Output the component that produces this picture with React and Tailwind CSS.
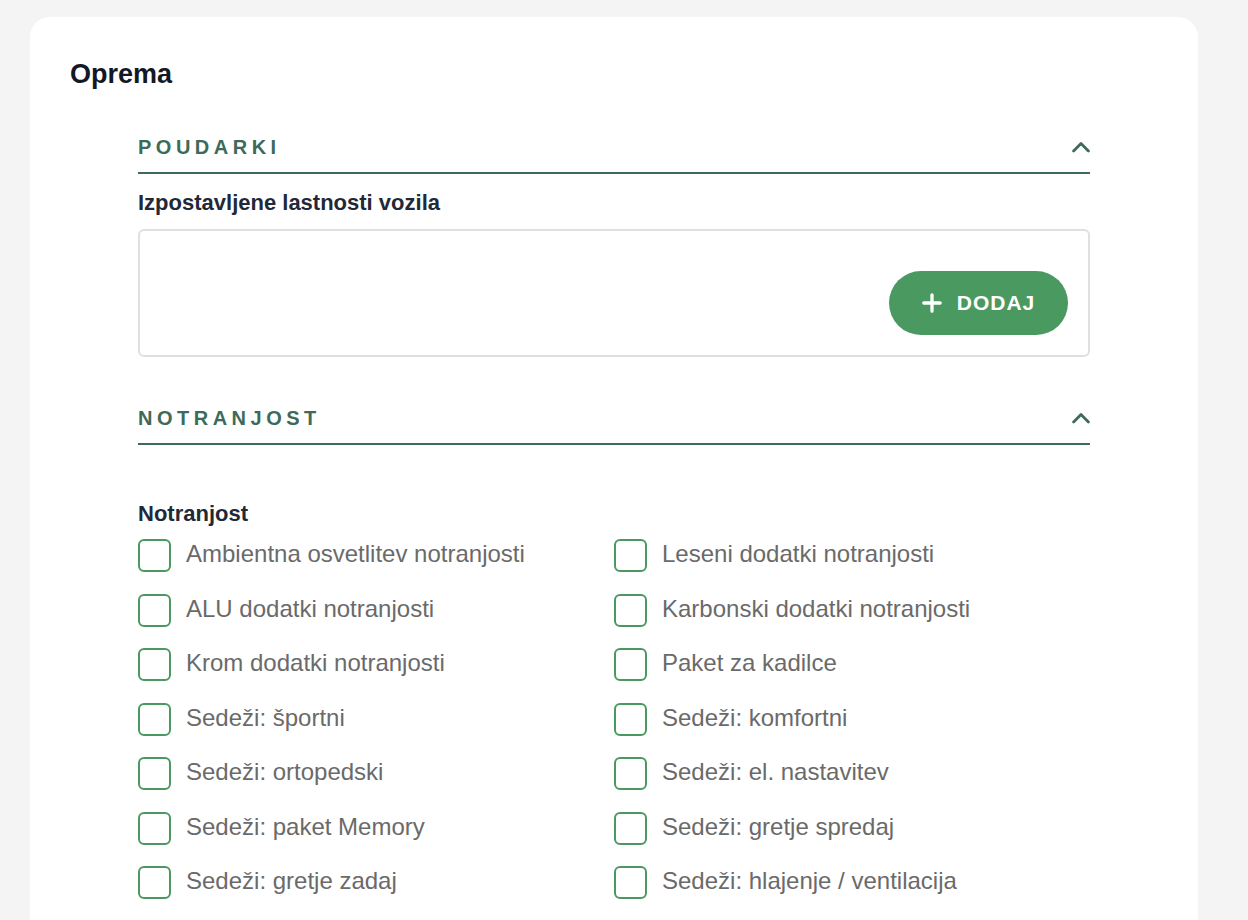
import React, { useState } from 'react';

const interior = [
  ['Ambientna osvetlitev notranjosti', 'Leseni dodatki notranjosti'],
  ['ALU dodatki notranjosti', 'Karbonski dodatki notranjosti'],
  ['Krom dodatki notranjosti', 'Paket za kadilce'],
  ['Sedeži: športni', 'Sedeži: komfortni'],
  ['Sedeži: ortopedski', 'Sedeži: el. nastavitev'],
  ['Sedeži: paket Memory', 'Sedeži: gretje spredaj'],
  ['Sedeži: gretje zadaj', 'Sedeži: hlajenje / ventilacija'],
];

const ChevronUp = () => (
  <svg width="18" height="12" viewBox="0 0 18 12" fill="none" className="text-[#3d6b58]">
    <path d="M1.6 10 L9 2.6 L16.4 10" stroke="currentColor" strokeWidth="2.8" strokeLinecap="round" strokeLinejoin="round" />
  </svg>
);

const SectionHeader = ({ title, open, onToggle }) => (
  <button
    onClick={onToggle}
    className="w-full flex items-center justify-between pb-[13px] border-b-2 border-[#3d6b58] text-left"
  >
    <span className="text-[20px] leading-6 font-bold tracking-[4.5px] text-[#3d6b58]">{title}</span>
    <span className={open ? 'flex' : 'flex rotate-180'}><ChevronUp /></span>
  </button>
);

const Checkbox = ({ label }) => {
  const [checked, setChecked] = useState(false);
  return (
    <label className="flex items-center gap-[15px] cursor-pointer">
      <span
        onClick={() => setChecked(!checked)}
        className={`w-[33px] h-[33px] shrink-0 rounded-[6px] border-2 border-[#4a9960] ${checked ? 'bg-[#4a9960]' : 'bg-white'}`}
      />
      <span className="text-[24px] leading-[30px] text-[#6a6a6a] -mt-[3px]">{label}</span>
    </label>
  );
};

export default function App() {
  const [openHighlights, setOpenHighlights] = useState(true);
  const [openInterior, setOpenInterior] = useState(true);

  return (
    <div className="min-h-screen bg-[#f4f4f4] pt-[17px] px-[30px] font-['Liberation_Sans',Arial,sans-serif]">
      <div className="w-[1168px] bg-white rounded-[20px] pt-[39px] pb-[60px] px-[40px]">
        <h2 className="text-[27px] leading-9 font-bold text-[#111827]">Oprema</h2>

        <div className="ml-[68px] w-[952px]">
          {/* Poudarki */}
          <div className="mt-[43px]">
            <SectionHeader title="POUDARKI" open={openHighlights} onToggle={() => setOpenHighlights(!openHighlights)} />
            {openHighlights && (
              <div>
                <p className="mt-[15px] text-[22px] leading-[28px] font-bold text-[#1f2937]">Izpostavljene lastnosti vozila</p>
                <div className="mt-3 h-[128px] border-2 border-[#e0e0e0] rounded-[6px] flex items-end justify-end pr-5 pb-5">
                  <button className="h-16 w-[179px] rounded-full bg-[#4a9960] text-white flex items-center justify-center gap-[15px]">
                    <svg width="20" height="20" viewBox="0 0 20 20" fill="none">
                      <path d="M10 1.8 V18.2 M1.8 10 H18.2" stroke="currentColor" strokeWidth="3.3" strokeLinecap="round" />
                    </svg>
                    <span className="text-[21px] leading-6 font-bold tracking-[1px]">DODAJ</span>
                  </button>
                </div>
              </div>
            )}
          </div>

          {/* Notranjost */}
          <div className="mt-[49px]">
            <SectionHeader title="NOTRANJOST" open={openInterior} onToggle={() => setOpenInterior(!openInterior)} />
            {openInterior && (
              <div className="mt-[55px]">
                <p className="text-[22px] leading-[28px] font-bold text-[#1f2937]">Notranjost</p>
                <div className="mt-[11px] grid grid-cols-2 gap-y-[21.5px]">
                  {interior.flat().map((item) => (
                    <Checkbox key={item} label={item} />
                  ))}
                </div>
              </div>
            )}
          </div>
        </div>
      </div>
    </div>
  );
}
